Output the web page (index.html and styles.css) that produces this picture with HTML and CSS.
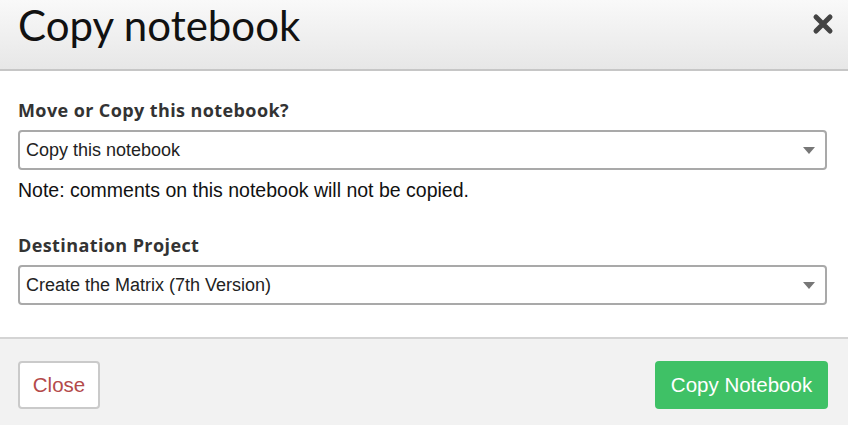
FILE: index.html
```html
<!DOCTYPE html>
<html>
<head>
<meta charset="utf-8">
<link rel="stylesheet" href="styles.css">
</head>
<body>
<div class="modal">
  <div class="header">
    <h1 class="title">Copy notebook</h1>
    <button class="close-x" aria-label="Close">
      <svg width="22" height="22" viewBox="0 0 22 22"><path d="M4 4 L18 18 M18 4 L4 18" stroke="#444" stroke-width="5" stroke-linecap="round"/></svg>
    </button>
  </div>
  <div class="body">
    <div class="field">
      <label class="label">Move or Copy this notebook?</label>
      <div class="select"><span>Copy this notebook</span><span class="arrow"></span></div>
      <p class="note">Note: comments on this notebook will not be copied.</p>
    </div>
    <div class="field">
      <label class="label">Destination Project</label>
      <div class="select"><span>Create the Matrix (7th Version)</span><span class="arrow"></span></div>
    </div>
  </div>
  <div class="footer">
    <button class="btn btn-close">Close</button>
    <button class="btn btn-primary">Copy Notebook</button>
  </div>
</div>
</body>
</html>
```
FILE: styles.css
```css
* { box-sizing: border-box; }
html, body { margin: 0; padding: 0; background: #fff; }
body { font-family: "Liberation Sans", Arial, sans-serif; width: 848px; height: 425px; overflow: hidden; }
.modal { display: flex; flex-direction: column; height: 425px; }
.header {
  height: 71px;
  background: linear-gradient(#f9f9f9, #e7e7e7);
  border-bottom: 2px solid #c6c6c6;
  display: flex;
  align-items: flex-start;
  justify-content: space-between;
  padding: 0 14px 0 18px;
}
.title {
  margin: 0;
  font-family: Lato, sans-serif;
  font-weight: 400;
  font-size: 42px;
  line-height: 1.2;
  color: #111;
}
.close-x { border: 0; background: none; padding: 0; width: 22px; height: 22px; margin-top: 13px; }
.close-x svg { display: block; }
.body { padding: 28px 21px 0 18px; height: 266px; }
.field { margin-bottom: 34px; }
.label {
  display: block;
  font-family: "Open Sans", sans-serif;
  font-weight: 700;
  font-size: 18px;
  letter-spacing: 0.4px;
  color: #333;
  margin-bottom: 9px;
  line-height: 22px;
}
.select {
  height: 40px;
  border: 2px solid #a9a9a9;
  border-radius: 4px;
  display: flex;
  align-items: center;
  justify-content: space-between;
  padding: 0 10px 0 6px;
  font-size: 18px;
  color: #222;
}
.arrow {
  width: 0; height: 0;
  border-left: 6px solid transparent;
  border-right: 6px solid transparent;
  border-top: 7px solid #777;
}
.note { margin: 10px 0 0; font-size: 19.5px; color: #111; line-height: 20px; }
.footer {
  flex: 1;
  background: #f2f2f2;
  border-top: 2px solid #d4d4d4;
  display: flex;
  justify-content: space-between;
  align-items: flex-start;
  padding: 22px 20px 0 18px;
}
.btn {
  height: 48px;
  font-family: "Liberation Sans", Arial, sans-serif;
  font-size: 20.5px;
  border-radius: 4px;
  padding: 0;
  cursor: pointer;
}
.btn-close { background: #fff; border: 2px solid #cacaca; color: #b44a4a; width: 82px; }
.btn-primary { background: #3fc166; border: 0; color: #fff; width: 173px; }
```
